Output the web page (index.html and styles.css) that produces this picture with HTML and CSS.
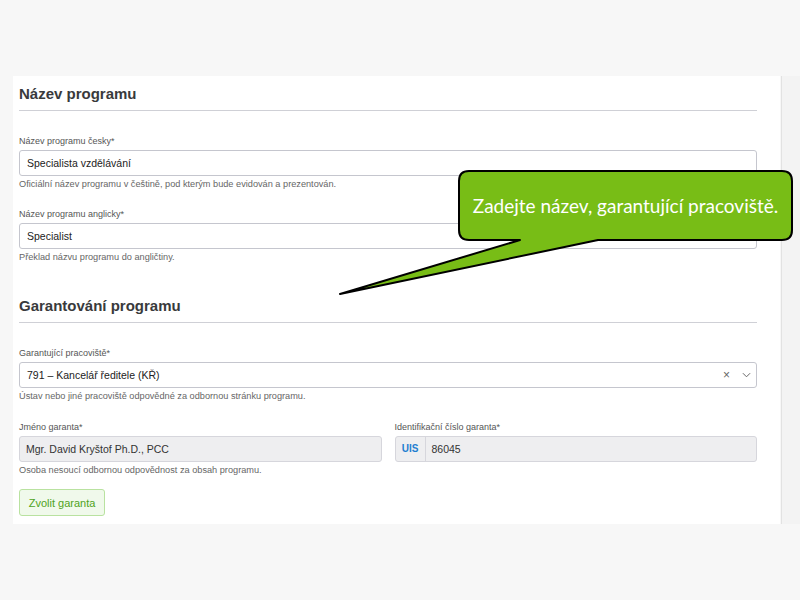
FILE: index.html
```html
<!DOCTYPE html>
<html lang="cs">
<head>
    <meta charset="UTF-8">
    <title>Program</title>
    <link rel="stylesheet" href="styles.css">
</head>
<body>
    <div class="page">
        <div class="panel">
            <h2 class="section-title">Název programu</h2>

            <div class="field">
                <label class="field-label">Název programu česky*</label>
                <div class="input">Specialista vzdělávání</div>
                <div class="field-help">Oficiální název programu v češtině, pod kterým bude evidován a prezentován.</div>
            </div>

            <div class="field">
                <label class="field-label">Název programu anglicky*</label>
                <div class="input">Specialist</div>
                <div class="field-help">Překlad názvu programu do angličtiny.</div>
            </div>

            <h2 class="section-title second">Garantování programu</h2>

            <div class="field">
                <label class="field-label">Garantující pracoviště*</label>
                <div class="input select">
                    <span class="select-value">791 – Kancelář ředitele (KŘ)</span>
                    <span class="select-clear">×</span>
                    <svg class="select-arrow" viewBox="0 0 10 6" width="9" height="6">
                        <path d="M1 1l4 4 4-4" fill="none" stroke="#666" stroke-width="1.1"/>
                    </svg>
                </div>
                <div class="field-help">Ústav nebo jiné pracoviště odpovědné za odbornou stránku programu.</div>
            </div>

            <div class="field-row">
                <div class="field">
                    <label class="field-label">Jméno garanta*</label>
                    <div class="input disabled">Mgr. David Kryštof Ph.D., PCC</div>
                    <div class="field-help">Osoba nesoucí odbornou odpovědnost za obsah programu.</div>
                </div>
                <div class="field">
                    <label class="field-label">Identifikační číslo garanta*</label>
                    <div class="input disabled with-addon">
                        <span class="addon">UIS</span>
                        <span class="addon-value">86045</span>
                    </div>
                </div>
            </div>

            <button class="btn-pick">Zvolit garanta</button>
        </div>
        <div class="side-strip"></div>
    </div>

    <div class="callout">
        <svg class="callout-shape" viewBox="0 0 470 140" width="470" height="140">
            <path d="M139 11 H452 Q462 11 462 21 V70 Q462 80 452 80 H268 L10 134 L190 80 H139 Q129 80 129 70 V21 Q129 11 139 11 Z"
                  fill="#78bd16" stroke="#000" stroke-width="2" stroke-linejoin="round"/>
        </svg>
        <div class="callout-text">Zadejte název, garantující pracoviště.</div>
    </div>
</body>
</html>
```

FILE: styles.css
```css
* {
    margin: 0;
    padding: 0;
    box-sizing: border-box;
}

body {
    font-family: "Liberation Sans", Arial, sans-serif;
    background: #f7f7f7;
    color: #333;
    width: 800px;
    height: 600px;
    overflow: hidden;
    position: relative;
}

.page {
    display: flex;
    padding-top: 76px;
    padding-left: 13px;
}

.panel {
    width: 767px;
    background: #fff;
    padding: 9px 23px 8px 6px;
}

.side-strip {
    flex: 1;
    background: #f3f3f3;
    border-left: 1px solid #e2e2e2;
    margin-left: 1px;
}

.section-title {
    font-size: 15px;
    line-height: 18px;
    font-weight: bold;
    color: #393a3c;
    padding-bottom: 7px;
    border-bottom: 1px solid #cfd0d6;
    margin-bottom: 24px;
}

.section-title.second {
    margin-top: 34px;
}

.field {
    display: flex;
    flex-direction: column;
}

.field + .field {
    margin-top: 18px;
}

.field-label {
    font-size: 9px;
    line-height: 12px;
    color: #555;
    margin-bottom: 3px;
}

.input {
    height: 26px;
    border: 1px solid #c5c6ce;
    border-radius: 3px;
    padding: 0 7px;
    font-size: 10.5px;
    line-height: 24px;
    color: #222;
    display: flex;
    align-items: center;
}

.input.disabled {
    background: #eeeef0;
    border-color: #d6d6dc;
    color: #333;
    padding: 0 6px;
}

.input.with-addon {
    padding: 0;
}

.select-value {
    flex: 1;
}

.select-clear {
    font-size: 12px;
    color: #666;
    margin-right: 12px;
}

.select-arrow {
    margin-right: -2px;
}

.addon {
    width: 30px;
    height: 100%;
    border-right: 1px solid #d6d6dc;
    color: #1f7ed0;
    font-weight: bold;
    font-size: 10px;
    text-align: center;
}

.addon-value {
    padding-left: 6px;
}

.field-help {
    font-size: 9.2px;
    line-height: 12px;
    color: #666;
    margin-top: 2px;
}

.field-row {
    display: grid;
    grid-template-columns: 1fr 1fr;
    column-gap: 13px;
    margin-top: 19px;
}

.field-row .field + .field {
    margin-top: 0;
}

.btn-pick {
    margin-top: 13px;
    height: 27px;
    width: 86px;
    font-family: inherit;
    font-size: 11px;
    color: #4fa322;
    background: #f0f9eb;
    border: 1px solid #b9e2a0;
    border-radius: 3px;
    cursor: pointer;
}

.callout {
    position: absolute;
    left: 330px;
    top: 160px;
    width: 470px;
    height: 140px;
}

.callout-shape {
    display: block;
}

.callout-text {
    position: absolute;
    left: 129px;
    top: 11px;
    width: 333px;
    height: 69px;
    display: flex;
    align-items: center;
    justify-content: center;
    font-family: Lato, "Open Sans", sans-serif;
    font-size: 19px;
    color: #fff;
}
```
